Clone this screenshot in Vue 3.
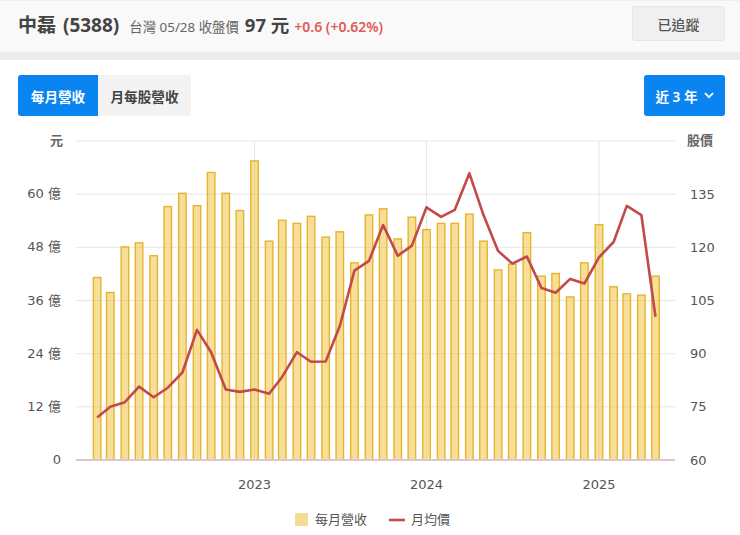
<script setup>
import { computed } from 'vue'

const revenue = [41.2, 37.8, 48.1, 49.0, 46.1, 57.2, 60.2, 57.4, 64.9, 60.2, 56.3, 67.5, 49.4, 54.1, 53.4, 55.0, 50.3, 51.5, 44.5, 55.3, 56.7, 49.9, 54.8, 52.0, 53.4, 53.4, 55.5, 49.4, 42.9, 44.2, 51.3, 41.5, 42.1, 36.8, 44.5, 53.1, 39.1, 37.5, 37.2, 41.5]
const price = [72.0, 75.0, 76.3, 80.7, 77.7, 80.4, 84.7, 96.7, 90.4, 79.9, 79.2, 79.9, 78.7, 83.5, 90.4, 87.7, 87.8, 97.8, 113.4, 116.2, 126.3, 117.6, 120.5, 131.3, 128.6, 130.6, 140.9, 129.1, 119.0, 115.4, 117.4, 108.5, 107.2, 111.1, 109.8, 117.2, 121.5, 131.7, 129.1, 100.4]

const plotLeft = 76
const plotRight = 675
const plotTop = 16
const plotBottom = 335
const rowHeight = (plotBottom - plotTop) / 6

// time axis: 2023-01 sits at x 254.5, one year is about 172px
const DAY = 86400000
const xAt = (year, month) => 254.5 + ((Date.UTC(year, month, 1) - Date.UTC(2023, 0, 1)) / DAY) * (172 / 365)

const points = computed(() => revenue.map((value, i) => {
  const x = xAt(2022, 1 + i)
  return {
    x,
    top: plotBottom - (value / 12) * rowHeight,
    lineY: plotBottom - ((price[i] - 60) / 15) * rowHeight
  }
}))

const linePoints = computed(() => points.value.map(p => `${p.x.toFixed(1)},${p.lineY.toFixed(1)}`).join(' '))

const leftTicks = ['0', '12 億', '24 億', '36 億', '48 億', '60 億']
const rightTicks = ['60', '75', '90', '105', '120', '135']
const rows = computed(() => leftTicks.map((label, i) => ({
  left: label,
  right: rightTicks[i],
  y: plotBottom - i * rowHeight
})))
const years = [2023, 2024, 2025].map(year => ({ year, x: xAt(year, 0) }))
</script>

<template>
  <div class="page">
    <header class="head">
      <div class="quote">
        <h1>中磊 (5388)</h1>
        <span class="market">台灣 05/28 收盤價</span>
        <strong class="close">97 元</strong>
        <span class="change">+0.6 (+0.62%)</span>
      </div>
      <button class="follow">已追蹤</button>
    </header>

    <div class="toolbar">
      <div class="tabs">
        <button class="tab active">每月營收</button>
        <button class="tab">月每股營收</button>
      </div>
      <button class="range">
        近 3 年
        <svg width="10" height="7" viewBox="0 0 10 7"><path d="M1 1.2 5 5.2 9 1.2" fill="none" stroke="#fff" stroke-width="1.8" /></svg>
      </button>
    </div>

    <svg class="chart" width="740" height="410" viewBox="0 0 740 410">
      <line v-for="r in rows.slice(1)" :key="r.y" :x1="plotLeft" :x2="plotRight" :y1="r.y" :y2="r.y" class="grid" />
      <line :x1="plotLeft" :x2="plotRight" :y1="plotTop" :y2="plotTop" class="grid" />
      <line v-for="y in years" :key="y.year" :x1="y.x" :x2="y.x" :y1="plotTop" :y2="plotBottom" class="grid" />

      <rect
        v-for="p in points"
        :key="p.x"
        :x="p.x - 3.75"
        :y="p.top"
        width="7.5"
        :height="plotBottom - p.top"
        class="bar"
      />
      <line :x1="plotLeft" :x2="plotRight" :y1="plotBottom" :y2="plotBottom" class="axis" />
      <polyline :points="linePoints" class="price" />

      <text x="63" :y="plotTop + 4" text-anchor="end" class="unit">元</text>
      <text x="687" :y="plotTop + 4" class="unit">股價</text>
      <template v-for="r in rows" :key="r.left">
        <text x="61" :y="r.y + 4" text-anchor="end" class="tick">{{ r.left }}</text>
        <text x="690" :y="r.y + 4.5" class="tick">{{ r.right }}</text>
      </template>
      <text v-for="y in years" :key="y.year" :x="y.x" y="364" text-anchor="middle" class="tick">{{ y.year }}</text>

      <rect x="295" y="388" width="13" height="13" fill="#f4dc96" />
      <text x="315" y="399" class="tick">每月營收</text>
      <line x1="389" x2="405" y1="395" y2="395" class="price" />
      <text x="411" y="399" class="tick">月均價</text>
    </svg>
  </div>
</template>

<style scoped>
.page {
  width: 740px;
  height: 535px;
  overflow: hidden;
  background: #fff;
  color: #444;
  font-family: "Noto Sans", "Noto Sans CJK TC", sans-serif;
}
.head {
  display: flex;
  justify-content: space-between;
  align-items: center;
  box-sizing: border-box;
  height: 60px;
  padding: 2px 15px 8px 18px;
  background: #f9f9f9;
  border-top: 1px solid #efefef;
  border-bottom: 8px solid #ececec;
}
.quote {
  display: flex;
  align-items: baseline;
}
h1 {
  margin: 0 10px 0 0;
  font-size: 19px;
  font-weight: 700;
  color: #444;
  word-spacing: 2px;
}
.market {
  font-size: 13.4px;
  color: #666;
  margin-right: 6px;
}
.close {
  font-size: 18.5px;
  color: #444;
  margin-right: 5px;
}
.change {
  font-size: 14px;
  font-weight: 600;
  color: #e05a5a;
}
button {
  font-family: inherit;
  border: 0;
  cursor: pointer;
}
.follow {
  width: 93px;
  height: 35px;
  font-size: 14px;
  font-weight: 500;
  color: #555;
  background: #f0f0f0;
  border: 1px solid #e6e6e6;
  border-radius: 3px;
}
.toolbar {
  display: flex;
  justify-content: space-between;
  padding: 15px 15px 0 18px;
}
.tabs {
  display: flex;
  height: 41px;
  border-radius: 3px;
  overflow: hidden;
}
.tab {
  width: 93px;
  font-size: 13.6px;
  font-weight: 600;
  color: #444;
  background: #f3f3f3;
}
.tab.active {
  width: 80px;
  color: #fff;
  background: #0a84f0;
}
.range {
  display: flex;
  align-items: center;
  justify-content: center;
  gap: 6px;
  width: 81px;
  height: 41px;
  font-size: 13.6px;
  font-weight: 600;
  color: #fff;
  background: #0a84f0;
  border-radius: 3px;
}
.chart {
  display: block;
  margin-top: 9px;
}
.grid {
  stroke: #e6e6e6;
  stroke-width: 1;
}
.axis {
  stroke: #dcc6d6;
  stroke-width: 2;
}
.bar {
  fill: rgba(240, 195, 70, 0.55);
  stroke: #e6b52c;
  stroke-width: 1.4;
}
.price {
  fill: none;
  stroke: #c24a4a;
  stroke-width: 2.6;
  stroke-linejoin: round;
}
.tick {
  font-family: "DejaVu Sans", "Noto Sans CJK TC", sans-serif;
  font-size: 13px;
  fill: #555;
}
.unit {
  font-family: "Noto Sans CJK TC", sans-serif;
  font-size: 13px;
  font-weight: 700;
  fill: #666;
}
</style>
